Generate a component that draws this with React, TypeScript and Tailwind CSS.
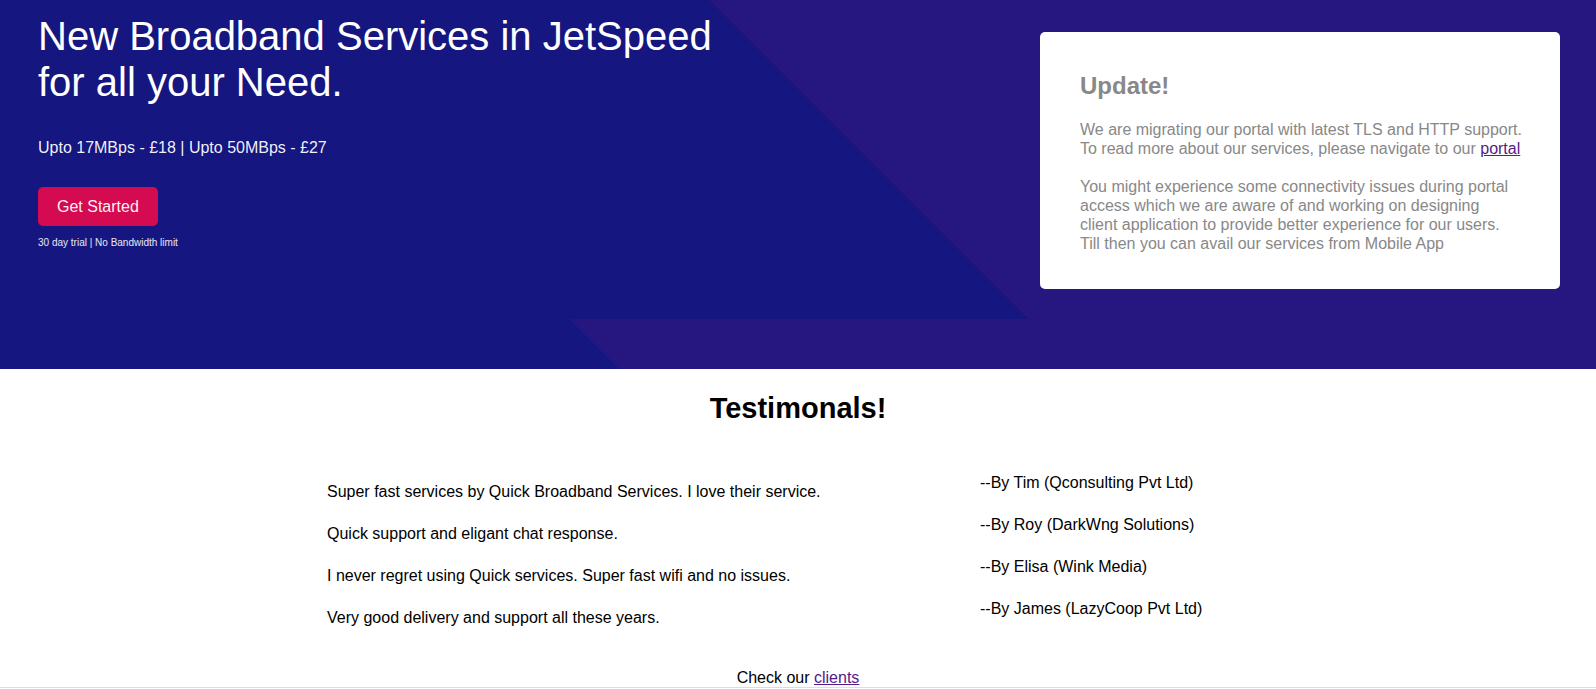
const testimonials = [
  'Super fast services by Quick Broadband Services. I love their service.',
  'Quick support and eligant chat response.',
  'I never regret using Quick services. Super fast wifi and no issues.',
  'Very good delivery and support all these years.',
];

const authors = [
  '--By Tim (Qconsulting Pvt Ltd)',
  '--By Roy (DarkWng Solutions)',
  '--By Elisa (Wink Media)',
  '--By James (LazyCoop Pvt Ltd)',
];

function Hero() {
  return (
    <header className="flex items-start justify-between bg-[linear-gradient(45deg,#15167f_calc(50%_+_1px),#26167f_calc(50%_+_1px))] bg-[length:100%_459px] bg-[position:0_-140px] pr-9 pb-20 pl-[38px] text-white">
      <div className="pt-[13px]">
        <h1 className="text-[40px] leading-[46px]">
          New Broadband Services in JetSpeed
          <br />
          for all your Need.
        </h1>
        <p className="mt-[33px] leading-[19px] text-white/95">Upto 17MBps - £18 | Upto 50MBps - £27</p>
        <button type="button" className="mt-[30px] block rounded-[5px] bg-[#d50b52] px-[19px] py-2.5 leading-[19px] text-white/95">
          Get Started
        </button>
        <p className="mt-[11px] text-[10px] leading-[12px] text-white/90">30 day trial | No Bandwidth limit</p>
      </div>
      <Update />
    </header>
  );
}

function Update() {
  return (
    <section className="mt-8 w-[520px] rounded-[5px] bg-white pt-10 pr-6 pb-9 pl-10 text-[#888888]">
      <h2 className="text-[24px] leading-[28px] font-bold">Update!</h2>
      <p className="mt-5 leading-[19px]">
        We are migrating our portal with latest TLS and HTTP support.
        <br />
        To read more about our services, please navigate to our{' '}
        <a href="#portal" className="text-[#551a8b] underline">portal</a>
      </p>
      <p className="mt-[19px] leading-[19px]">
        You might experience some connectivity issues during portal
        <br />
        access which we are aware of and working on designing
        <br />
        client application to provide better experience for our users.
        <br />
        Till then you can avail our services from Mobile App
      </p>
    </section>
  );
}

function Testimonials() {
  return (
    <main className="pt-[22px]">
      <h2 className="text-center text-[29px] leading-[34px] font-bold">Testimonals!</h2>
      <div className="mt-12 grid grid-cols-[653fr_289fr] px-[327px] leading-[19px]">
        <ul className="mt-[9px] flex flex-col gap-[23px]">
          {testimonials.map((text) => (
            <li key={text}>{text}</li>
          ))}
        </ul>
        <ul className="flex flex-col gap-[23px]">
          {authors.map((name) => (
            <li key={name}>{name}</li>
          ))}
        </ul>
      </div>
    </main>
  );
}

export default function App() {
  return (
    <div className="bg-white font-['Liberation_Sans',Arial,sans-serif] text-[16px] text-black">
      <Hero />
      <Testimonials />
      <footer className="mt-[41px] border-b border-[#dddddd] text-center leading-[19px]">
        Check our <a href="#clients" className="text-[#551a8b] underline">clients</a>
      </footer>
    </div>
  );
}
